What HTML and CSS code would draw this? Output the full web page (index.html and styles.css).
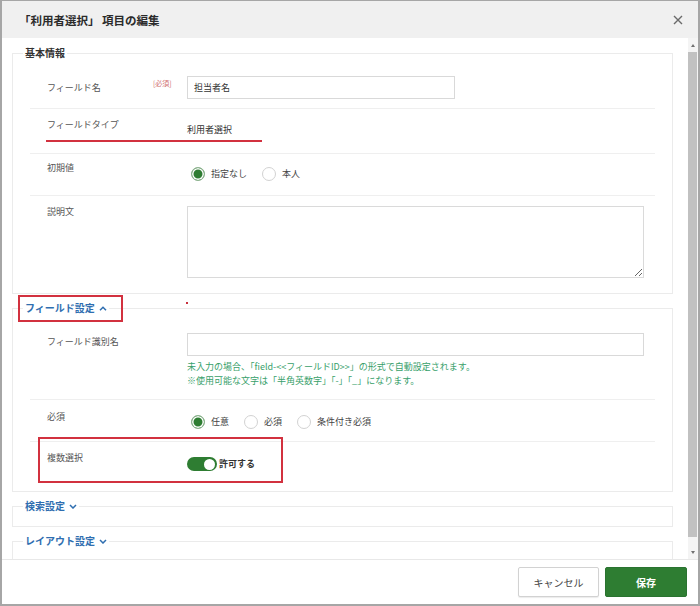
FILE: index.html
```html
<!DOCTYPE html>
<html lang="ja">
<head>
<meta charset="utf-8">
<title>「利用者選択」 項目の編集</title>
<link rel="stylesheet" href="styles.css">
</head>
<body>
<div class="dialog">
  <header class="dlg-head">
    <h1 class="dlg-title">「利用者選択」 項目の編集</h1>
    <button class="close" type="button" aria-label="閉じる">
      <svg width="10" height="10" viewBox="0 0 10 10"><path d="M1 1L9 9M9 1L1 9" stroke="#6a6a6a" stroke-width="1.4" fill="none"/></svg>
    </button>
  </header>

  <div class="dlg-body">
    <div class="scroll">
      <fieldset class="group">
        <legend class="group-title plain">基本情報</legend>
        <div class="rows">
          <div class="row row-name">
            <div class="label">フィールド名</div>
            <div class="req">[必須]</div>
            <div class="value"><input class="text short" type="text" value="担当者名"></div>
          </div>
          <div class="row row-type">
            <div class="label">フィールドタイプ</div>
            <div class="value offset-5">利用者選択</div>
            <span class="mark-line"></span>
          </div>
          <div class="row row-default">
            <div class="label">初期値</div>
            <div class="value offset-5">
              <div class="choices">
                <span class="choice"><span class="radio on"></span>指定なし</span>
                <span class="choice"><span class="radio"></span>本人</span>
              </div>
            </div>
          </div>
          <div class="row row-desc">
            <div class="label">説明文</div>
            <div class="value"><textarea class="memo"></textarea></div>
          </div>
        </div>
      </fieldset>

      <fieldset class="group">
        <legend class="group-title">フィールド設定<svg class="chev" width="8" height="5" viewBox="0 0 8 5"><path d="M1 4.2L4 1.2L7 4.2" stroke="#2f6eb0" stroke-width="1.5" fill="none"/></svg><span class="mark-legend"></span><span class="mark-dot"></span></legend>
        <div class="rows">
          <div class="row row-ident">
            <div class="label offset-3">フィールド識別名</div>
            <div class="value">
              <input class="text wide" type="text">
              <p class="help">未入力の場合、「field-&lt;&lt;フィールドID&gt;&gt;」の形式で自動設定されます。<br>※使用可能な文字は「半角英数字」「-」「_」になります。</p>
            </div>
          </div>
          <div class="row row-required">
            <div class="label">必須</div>
            <div class="value offset-4">
              <div class="choices">
                <span class="choice"><span class="radio on"></span>任意</span>
                <span class="choice"><span class="radio"></span>必須</span>
                <span class="choice"><span class="radio"></span>条件付き必須</span>
              </div>
            </div>
          </div>
          <div class="row row-multi">
            <div class="label">複数選択</div>
            <div class="value offset-5">
              <div class="toggle"><span class="switch"><span class="knob"></span></span><b>許可する</b></div>
            </div>
            <span class="mark-box"></span>
          </div>
        </div>
      </fieldset>

      <fieldset class="group">
        <legend class="group-title">検索設定<svg class="chev" width="8" height="5" viewBox="0 0 8 5"><path d="M1 1L4 4L7 1" stroke="#2f6eb0" stroke-width="1.5" fill="none"/></svg></legend>
        <div class="empty"></div>
      </fieldset>

      <fieldset class="group">
        <legend class="group-title">レイアウト設定<svg class="chev" width="8" height="5" viewBox="0 0 8 5"><path d="M1 1L4 4L7 1" stroke="#2f6eb0" stroke-width="1.5" fill="none"/></svg></legend>
        <div class="empty"></div>
      </fieldset>
    </div>

    <div class="scrollbar">
      <span class="sb-btn"><span class="tri-up"></span></span>
      <span class="sb-track"><span class="sb-thumb"></span></span>
      <span class="sb-btn"><span class="tri-down"></span></span>
    </div>
  </div>

  <footer class="dlg-foot">
    <button class="btn btn-cancel" type="button">キャンセル</button>
    <button class="btn btn-save" type="button">保存</button>
  </footer>
</div>
</body>
</html>
```

FILE: styles.css
```css
html, body {
  margin: 0;
  padding: 0;
  background: #fff;
}

body {
  font-family: "Noto Sans CJK JP", "Noto Sans", sans-serif;
  color: #333;
}

.dialog {
  width: 700px;
  height: 606px;
  box-sizing: border-box;
  border: 2px solid #a6a6a6;
  border-top-width: 1px;
  display: flex;
  flex-direction: column;
  background: #fff;
  overflow: hidden;
}

/* header */
.dlg-head {
  height: 37px;
  flex: none;
  background: #f0f0f0;
  display: flex;
  align-items: center;
  justify-content: space-between;
  padding: 0 15px 0 17px;
}

.dlg-title {
  margin: 0;
  font-size: 11.5px;
  font-weight: bold;
  color: #2b2b2b;
}

.close {
  width: 10px;
  height: 10px;
  padding: 0;
  border: 0;
  background: none;
  display: flex;
}

/* body */
.dlg-body {
  flex: 1;
  display: flex;
  min-height: 0;
}

.scroll {
  flex: 1;
  overflow: hidden;
  padding: 8px 15px 0 10px;
}

.scrollbar {
  width: 10px;
  flex: none;
  display: flex;
  flex-direction: column;
  background: #f4f4f4;
}

.sb-btn {
  height: 14px;
  flex: none;
  display: flex;
  align-items: center;
  justify-content: center;
}

.sb-track {
  flex: 1;
  display: flex;
  flex-direction: column;
}

.sb-thumb {
  height: 485px;
  width: 9px;
  background: #c1c1c1;
}

.tri-up {
  width: 0;
  height: 0;
  border-left: 2.5px solid transparent;
  border-right: 2.5px solid transparent;
  border-bottom: 3px solid #707070;
}

.tri-down {
  width: 0;
  height: 0;
  border-left: 2.5px solid transparent;
  border-right: 2.5px solid transparent;
  border-top: 3px solid #707070;
}

/* groups */
.group {
  margin: 0 0 7px;
  padding: 0;
  border: 1px solid #ebebeb;
  min-width: 0;
}

.group-title {
  position: relative;
  margin-left: 10px;
  padding: 0 2px;
  font-size: 10px;
  font-weight: bold;
  line-height: 14px;
  color: #2f6eb0;
}

.group-title.plain {
  color: #333;
}

.chev {
  margin-left: 4px;
  vertical-align: 1px;
}

.empty {
  height: 13px;
}

.rows {
  padding: 0 17px;
}

.row {
  position: relative;
  display: grid;
  grid-template-columns: 106px 34px 1fr;
  align-items: start;
  padding: 10px 0 10px 17px;
  border-bottom: 1px solid #efefef;
}

.row:last-child {
  border-bottom: 0;
}

.label {
  grid-column: 1;
  font-size: 9px;
  line-height: 12px;
  color: #555;
}

.req {
  grid-column: 2;
  align-self: start;
  margin-top: 2px;
  font-size: 7px;
  line-height: 10px;
  color: #d07070;
}

.value {
  grid-column: 3;
  min-width: 0;
  font-size: 9px;
  line-height: 12px;
  color: #333;
}

.offset-3 { margin-top: 3px; }
.offset-4 { margin-top: 4px; }
.offset-5 { margin-top: 5px; }

.row-name {
  padding: 16px 0 9px 17px;
  align-items: center;
}

.row-type { padding: 10px 0 17px 17px; }
.row-default { padding: 8px 0 14px 17px; }
.row-desc { padding: 10px 0 15px 17px; }
.row-ident { padding: 18px 0 11px 17px; }
.row-required { padding: 11px 0 12px 17px; }
.row-multi { padding: 10px 0 20px 17px; }

/* controls */
.text {
  display: block;
  box-sizing: border-box;
  height: 23px;
  margin: 0;
  padding: 0 6px;
  border: 1px solid #d9d9d9;
  border-radius: 0;
  background: #fff;
  font-family: inherit;
  font-size: 9px;
  color: #333;
  outline: none;
}

.text.short { width: 268px; }
.text.wide { width: 457px; }

.memo {
  display: block;
  box-sizing: border-box;
  width: 457px;
  height: 72px;
  margin: 0;
  padding: 4px 6px;
  border: 1px solid #dadada;
  border-radius: 0;
  font-family: inherit;
  font-size: 9px;
  resize: both;
}

.help {
  margin: 4px 0 0;
  font-size: 9px;
  line-height: 14px;
  color: #37a06a;
}

.choices {
  display: flex;
  align-items: center;
  gap: 15px;
  margin-left: 4px;
}

.choice {
  display: flex;
  align-items: center;
  gap: 6px;
  color: #444;
}

.radio {
  width: 14px;
  height: 14px;
  box-sizing: border-box;
  border-radius: 50%;
  border: 1px solid #d2d2d2;
  background: #fff;
}

.radio.on {
  border-color: #8fb391;
  background: #2e7d32;
  box-shadow: inset 0 0 0 1.5px #fff;
}

.toggle {
  display: flex;
  align-items: center;
  gap: 2px;
}

.toggle b {
  font-weight: bold;
  color: #333;
}

.switch {
  width: 30px;
  height: 14px;
  box-sizing: border-box;
  padding: 0 2px;
  border-radius: 7px;
  background: #2e7d32;
  display: flex;
  justify-content: flex-end;
  align-items: center;
}

.knob {
  width: 11px;
  height: 11px;
  border-radius: 50%;
  background: #fff;
}

/* red annotations drawn over the screenshot */
.mark-line {
  position: absolute;
  left: 16px;
  top: 31px;
  width: 216px;
  height: 2px;
  background: #d2313f;
}

.mark-box {
  position: absolute;
  left: 8px;
  top: -5px;
  width: 245px;
  height: 46px;
  box-sizing: border-box;
  border: 2px solid #d2313f;
}

.mark-legend {
  position: absolute;
  inset: -6px -14px -7px -5px;
  border: 2px solid #d2313f;
}

.mark-dot {
  position: absolute;
  left: 163px;
  top: 1px;
  width: 2px;
  height: 2px;
  background: #c8303c;
}

/* footer */
.dlg-foot {
  height: 45px;
  flex: none;
  box-sizing: border-box;
  border-top: 1px solid #e8e8e8;
  display: flex;
  justify-content: flex-end;
  align-items: center;
  gap: 6px;
  padding-right: 11px;
}

.btn {
  height: 30px;
  margin: 0;
  padding: 0;
  border-radius: 2px;
  font-family: inherit;
  font-size: 10px;
}

.btn-cancel {
  width: 81px;
  background: #fff;
  border: 1px solid #d2d2d2;
  color: #444;
  box-shadow: 0 1px 1px rgba(0, 0, 0, 0.08);
}

.btn-save {
  width: 82px;
  background: #2e7d32;
  border: 1px solid #2a7330;
  color: #fff;
  font-weight: bold;
}
```
